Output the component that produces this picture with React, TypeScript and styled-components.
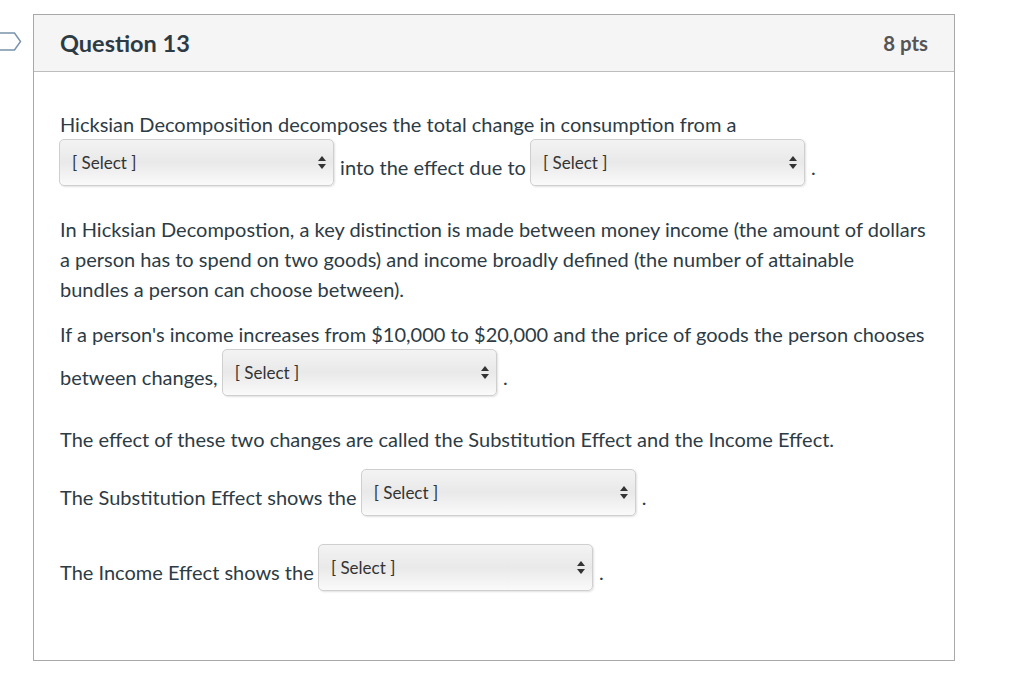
import React from 'react';
import styled, { createGlobalStyle } from 'styled-components';

const GlobalStyle = createGlobalStyle`
  body {
    margin: 0;
    background: #fff;
    font-family: Lato, "Liberation Sans", sans-serif;
    color: #2d3b45;
  }
`;

const Page = styled.div`
  display: flex;
  padding-top: 14px;
`;

const FlagColumn = styled.div`
  width: 33px;
  flex: none;
  padding-top: 18px;
  > svg {
    display: block;
  }
`;

const Card = styled.div`
  width: 922px;
  box-sizing: border-box;
  border: 1px solid #a8a8a8;
`;

const Header = styled.div`
  display: flex;
  justify-content: space-between;
  align-items: center;
  height: 56px;
  padding: 0 26px;
  background: #f5f5f5;
  border-bottom: 1px solid #bdbdbd;
`;

const Title = styled.h2`
  margin: 0;
  font-size: 23.5px;
  font-weight: 700;
  color: #2d3b45;
`;

const Points = styled.div`
  font-size: 20.4px;
  font-weight: 700;
  color: #555;
`;

const Body = styled.div`
  padding: 22px 26px 41px;
`;

const Para = styled.p`
  margin: 15px 0;
  font-size: 20px;
  line-height: 30px;
`;

const SelectBox = styled.span<{ $w?: number }>`
  display: inline-flex;
  align-items: center;
  justify-content: space-between;
  box-sizing: border-box;
  width: ${p => p.$w ?? 275}px;
  height: 47px;
  margin: 0 1px 13px -1px;
  padding: 0 7px 0 12px;
  vertical-align: 6px;
  border: 1px solid #cfcfcf;
  border-radius: 5px;
  background: linear-gradient(to bottom, #f3f3f3 0%, #e9e9e9 50%, #fafafa 100%);
  box-shadow: 1px 1px 2px rgba(0, 0, 0, 0.12);
  font-size: 17px;
  line-height: 20px;
  color: #333;
  > svg {
    flex: none;
  }
`;

function Arrows() {
  return (
    <svg width="8" height="13" viewBox="0 0 8 13">
      <path d="M4 0 L8 5 H0 Z" fill="#333" />
      <path d="M0 8 H8 L4 13 Z" fill="#333" />
    </svg>
  );
}

function Select({ w }: { w?: number }) {
  return (
    <SelectBox $w={w}>
      <span>[ Select ]</span>
      <Arrows />
    </SelectBox>
  );
}

export default function App() {
  return (
    <>
      <GlobalStyle />
      <Page>
        <FlagColumn>
          <svg width="22" height="19" viewBox="0 0 22 19">
            <path d="M0 1 H14.5 L20.5 9.5 L14.5 18 H0" fill="none" stroke="#7a93ab" strokeWidth="1.5" />
          </svg>
        </FlagColumn>
        <Card>
          <Header>
            <Title>Question 13</Title>
            <Points>8 pts</Points>
          </Header>
          <Body>
            <Para>
              Hicksian Decomposition decomposes the total change in consumption from a
              <br />
              <Select w={275} /> into the effect due to <Select w={275} /> .
            </Para>
            <Para>
              In Hicksian Decompostion, a key distinction is made between money income (the amount of dollars
              a person has to spend on two goods) and income broadly defined (the number of attainable
              <br />
              bundles a person can choose between).
            </Para>
            <Para>
              If a person's income increases from $10,000 to $20,000 and the price of goods the person chooses
              between changes, <Select w={275} /> .
            </Para>
            <Para>The effect of these two changes are called the Substitution Effect and the Income Effect.</Para>
            <Para>
              The Substitution Effect shows the <Select w={275} /> .
            </Para>
            <Para>
              The Income Effect shows the <Select w={275} /> .
            </Para>
          </Body>
        </Card>
      </Page>
    </>
  );
}
